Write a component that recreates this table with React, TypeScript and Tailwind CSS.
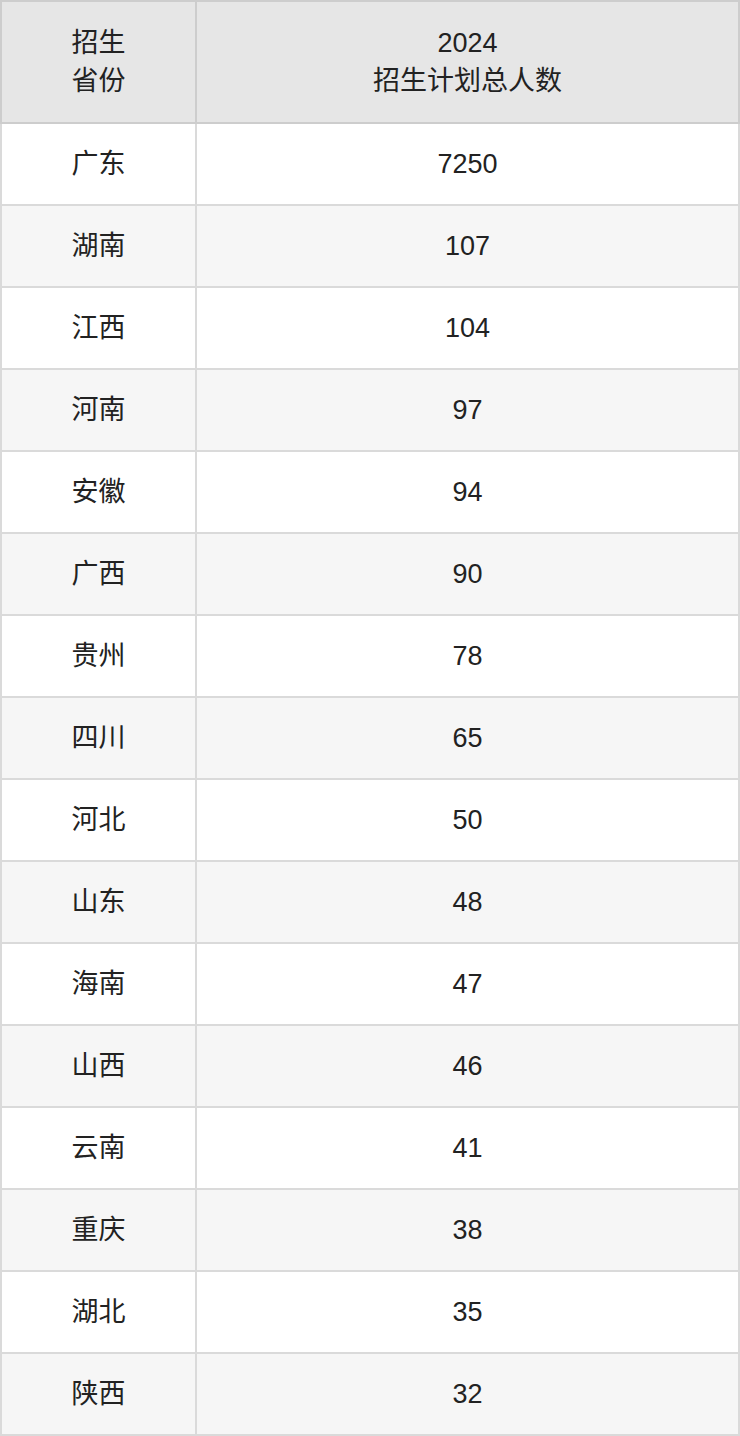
const rows: [string, string][] = [
  ["广东", "7250"],
  ["湖南", "107"],
  ["江西", "104"],
  ["河南", "97"],
  ["安徽", "94"],
  ["广西", "90"],
  ["贵州", "78"],
  ["四川", "65"],
  ["河北", "50"],
  ["山东", "48"],
  ["海南", "47"],
  ["山西", "46"],
  ["云南", "41"],
  ["重庆", "38"],
  ["湖北", "35"],
  ["陕西", "32"],
];

export default function App() {
  return (
    <div
      className="w-[740px] bg-white text-[#222222]"
      style={{ fontFamily: '"Liberation Sans", "Noto Sans CJK SC", sans-serif' }}
    >
      <table className="w-[740px] border-collapse table-fixed text-[27px]">
        <colgroup>
          <col className="w-[195px]" />
          <col />
        </colgroup>
        <thead>
          <tr className="h-[122px] bg-[#e6e6e6]">
            <th className="border-2 border-[#cdcdcd] font-normal leading-[38px] text-center">
              招生
              <br />
              省份
            </th>
            <th className="border-2 border-[#cdcdcd] font-normal leading-[38px] text-center">
              2024
              <br />
              招生计划总人数
            </th>
          </tr>
        </thead>
        <tbody>
          {rows.map(([prov, num], i) => (
            <tr key={prov} className={`h-[82px] ${i % 2 === 1 ? "bg-[#f6f6f6]" : "bg-white"}`}>
              <td className="border-2 border-[#dadada] text-center">{prov}</td>
              <td className="border-2 border-[#dadada] text-center">{num}</td>
            </tr>
          ))}
        </tbody>
      </table>
    </div>
  );
}
